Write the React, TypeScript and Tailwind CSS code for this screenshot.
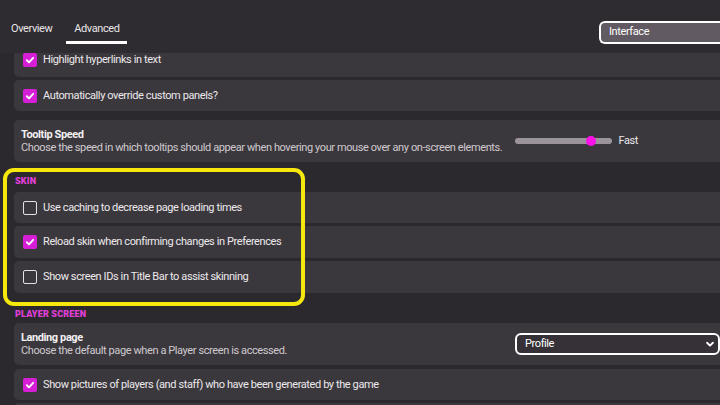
import React from "react";

const font = { fontFamily: "Roboto, 'Noto Sans', sans-serif" };

function CheckBox({ checked }: { checked: boolean }) {
  if (checked) {
    return (
      <span className="flex h-[14px] w-[14px] shrink-0 items-center justify-center rounded-[2px] bg-[#d61ed6]">
        <svg viewBox="0 0 12 12" className="h-[10px] w-[10px]" fill="none" stroke="white" strokeWidth="2.2" strokeLinecap="round" strokeLinejoin="round">
          <path d="M2.2 6.3 L4.8 8.8 L9.8 3.4" />
        </svg>
      </span>
    );
  }
  return <span className="h-[14px] w-[14px] shrink-0 rounded-[2px] border-[1.5px] border-[#e4e0e4]" />;
}

function CheckRow({ label, checked, className = "" }: { label: string; checked: boolean; className?: string }) {
  return (
    <div className={`flex gap-[6px] rounded-l-[5px] bg-[#3b383d] pl-[9px] ${className}`}>
      <CheckBox checked={checked} />
      <span className="text-[11px] leading-[14px] text-[#ece9ec]">{label}</span>
    </div>
  );
}

function SectionLabel({ children }: { children: React.ReactNode }) {
  return (
    <div className="pl-[1px] text-[9px] font-black uppercase leading-[10px] tracking-[0.02em] text-[#e23fd9]">
      {children}
    </div>
  );
}

export default function App() {
  return (
    <div style={font} className="relative h-[405px] w-[720px] overflow-hidden bg-[#2c292e] tracking-[-0.4px]">
      {/* header */}
      <div className="flex h-[53px] items-start bg-[#2f2c31]">
        <div className="flex pl-[11px] pt-[21px] text-[11px] text-[#e8e5e8]">
          <span>Overview</span>
          <div className="ml-[14px] flex flex-col items-center">
            <span className="px-[6px]">Advanced</span>
            <span className="mt-[3px] h-[3px] w-[61px] bg-white" />
          </div>
        </div>
        <div className="ml-auto mt-[21px] flex h-[23px] w-[121px] items-center rounded-l-[6px] border-[2px] border-r-0 border-white bg-[#625a62] pl-[8px] text-[11px] text-white">
          Interface
        </div>
      </div>

      <div className="flex flex-col pl-[14px]">
        <CheckRow label="Highlight hyperlinks in text" checked className="h-[24px] items-start rounded-tl-none" />
        <CheckRow label="Automatically override custom panels?" checked className="mt-[3px] h-[31px] items-center" />

        <div className="mt-[9px] flex h-[42px] items-center rounded-l-[5px] bg-[#3b383d] pl-[7px]">
          <div className="flex flex-col">
            <span className="text-[11px] font-bold leading-[13px] text-[#f2eff2]">Tooltip Speed</span>
            <span className="text-[11px] leading-[14px] text-[#cfcacf]">
              Choose the speed in which tooltips should appear when hovering your mouse over any on-screen elements.
            </span>
          </div>
          <div className="ml-auto mr-[82px] flex items-center gap-[6px]">
            <div className="relative h-[6px] w-[97px] rounded-full bg-[#9b959b]">
              <span className="absolute left-[71px] top-[-2px] h-[10px] w-[10px] rounded-full bg-[#ff10e8]" />
            </div>
            <span className="text-[11px] text-[#ece9ec]">Fast</span>
          </div>
        </div>

        <div className="mt-[14px]">
          <SectionLabel>Skin</SectionLabel>
        </div>
        <CheckRow label="Use caching to decrease page loading times" checked={false} className="mt-[6px] h-[31px] items-center" />
        <CheckRow label="Reload skin when confirming changes in Preferences" checked className="mt-[3px] h-[32px] items-center" />
        <CheckRow label="Show screen IDs in Title Bar to assist skinning" checked={false} className="mt-[3px] h-[32px] items-center" />

        <div className="mt-[16px]">
          <SectionLabel>Player Screen</SectionLabel>
        </div>
        <div className="mt-[4px] flex h-[42px] items-center rounded-l-[5px] bg-[#3b383d] pl-[7px]">
          <div className="flex flex-col">
            <span className="text-[11px] font-bold leading-[13px] text-[#f2eff2]">Landing page</span>
            <span className="text-[11px] leading-[14px] text-[#cfcacf]">Choose the default page when a Player screen is accessed.</span>
          </div>
          <div className="ml-auto flex h-[22px] w-[205px] items-center rounded-[6px] border-[2px] border-white bg-[#353137] pl-[8px] pr-[3px] text-[11px] text-white">
            <span>Profile</span>
            <svg viewBox="0 0 12 12" className="ml-auto h-[10px] w-[10px]" fill="none" stroke="white" strokeWidth="2.2" strokeLinecap="round" strokeLinejoin="round">
              <path d="M2.5 4.5 L6 8 L9.5 4.5" />
            </svg>
          </div>
        </div>
        <CheckRow
          label="Show pictures of players (and staff) who have been generated by the game"
          checked
          className="mt-[4px] h-[31px] items-center"
        />
        <div className="mt-[3px] h-[30px] rounded-l-[5px] bg-[#3b383d]" />
      </div>

      {/* annotation highlight */}
      <div className="pointer-events-none absolute left-[3px] top-[168px] h-[138px] w-[302px] rounded-[11px] border-[4px] border-[#f6e80c]" />
    </div>
  );
}
